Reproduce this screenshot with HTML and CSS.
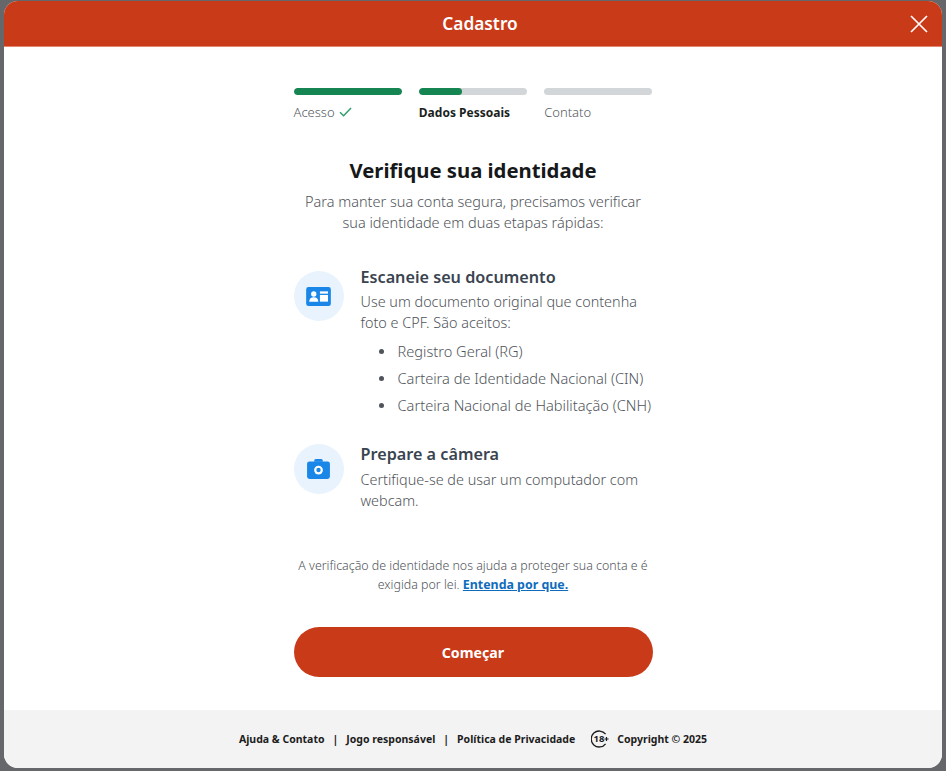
FILE: index.html
```html
<!DOCTYPE html>
<html lang="pt-BR">
<head>
  <meta charset="UTF-8" />
  <meta name="viewport" content="width=device-width, initial-scale=1.0"/>
  <title>Cadastro</title>
  <link rel="stylesheet" href="styles.css">
</head>
<body>
  <div class="modal">
    <header class="modal-header">
      <h1>Cadastro</h1>
      <button class="close" aria-label="Fechar">
        <svg width="18" height="18" viewBox="0 0 18 18"><path d="M1 1L17 17M17 1L1 17" stroke="#fff" stroke-width="1.7" fill="none"/></svg>
      </button>
    </header>

    <main class="content">
      <div class="steps">
        <div class="step">
          <div class="bar"><div class="fill fill-full"></div></div>
          <div class="step-label">Acesso
            <svg class="check" width="13" height="10" viewBox="0 0 13 10"><path d="M1 5.2L4.6 8.8L12 1" stroke="#2a9d68" stroke-width="1.4" fill="none"/></svg>
          </div>
        </div>
        <div class="step">
          <div class="bar"><div class="fill fill-part"></div></div>
          <div class="step-label step-current">Dados Pessoais</div>
        </div>
        <div class="step">
          <div class="bar"></div>
          <div class="step-label">Contato</div>
        </div>
      </div>

      <h2>Verifique sua identidade</h2>
      <p class="intro">Para manter sua conta segura, precisamos verificar sua identidade em duas etapas rápidas:</p>

      <section class="item item-doc">
        <div class="item-icon">
          <svg width="25" height="19" viewBox="0 0 26 20">
            <rect width="26" height="20" rx="2.5" fill="#1a86e8"/>
            <circle cx="8" cy="7.4" r="2.8" fill="#fff"/>
            <path d="M3.2 15.5c0-3 2-4.6 4.8-4.6s4.8 1.6 4.8 4.6z" fill="#fff"/>
            <rect x="14.5" y="4.6" width="8.5" height="2.4" fill="#fff"/>
            <rect x="14.5" y="8.4" width="8.5" height="7" fill="#fff"/>
          </svg>
        </div>
        <div class="item-body">
          <h3>Escaneie seu documento</h3>
          <p>Use um documento original que contenha foto e CPF. São aceitos:</p>
          <ul>
            <li>Registro Geral (RG)</li>
            <li>Carteira de Identidade Nacional (CIN)</li>
            <li>Carteira Nacional de Habilitação (CNH)</li>
          </ul>
        </div>
      </section>

      <section class="item item-cam">
        <div class="item-icon">
          <svg width="23" height="20" viewBox="0 0 24 21">
            <path d="M7.5 3V1.8C7.5 .8 8.2 0 9.2 0h5.6c1 0 1.7 .8 1.7 1.8V3" fill="#1a86e8"/>
            <rect y="2.6" width="24" height="18.4" rx="2.5" fill="#1a86e8"/>
            <circle cx="12" cy="11.6" r="4.6" fill="#fff"/>
            <circle cx="12" cy="11.6" r="2.3" fill="#1a86e8"/>
          </svg>
        </div>
        <div class="item-body">
          <h3>Prepare a câmera</h3>
          <p>Certifique-se de usar um computador com webcam.</p>
        </div>
      </section>

      <p class="notice"><span class="notice-line">A verificação de identidade nos ajuda a proteger sua conta e é</span> <span>exigida por lei.</span> <a href="#">Entenda por que.</a></p>

      <button class="start">Começar</button>
    </main>

    <footer class="modal-footer">
      <a href="#">Ajuda &amp; Contato</a>
      <span class="sep">|</span>
      <a href="#">Jogo responsável</a>
      <span class="sep">|</span>
      <a href="#">Política de Privacidade</a>
      <svg class="age" width="18" height="18" viewBox="0 0 18 18">
        <path d="M14.6 4.2A8 8 0 1 0 14.6 13.8" stroke="#1c1c1c" stroke-width="1.3" fill="none"/>
        <text x="2.6" y="12.4" class="age-text">18</text>
        <path d="M13.4 9h4.2M15.5 6.9v4.2" stroke="#1c1c1c" stroke-width="1.2"/>
      </svg>
      <span class="copy">Copyright © 2025</span>
    </footer>
  </div>
</body>
</html>
```

FILE: styles.css
```css
* {
  box-sizing: border-box;
}
html, body {
  height: 100%;
}
body {
  margin: 0;
  padding: 1px 4px 3px 4px;
  background: #66676b;
  font-family: "Noto Sans", "Open Sans", sans-serif;
  color: #4f545a;
}
.modal {
  height: 767px;
  background: #fff;
  border-radius: 14px;
  display: flex;
  flex-direction: column;
  overflow: hidden;
}
.modal-header {
  height: 46px;
  background: #c93a19;
  border-bottom: 1px solid #e5876f;
  display: flex;
  align-items: center;
  justify-content: center;
  padding: 0 0 0 14px;
  position: relative;
  flex: none;
}
.modal-header h1 {
  margin: 0;
  font-size: 17.3px;
  font-weight: 600;
  color: #fff;
}
.close {
  position: absolute;
  right: 14px;
  top: 14px;
  width: 18px;
  height: 18px;
  padding: 0;
  border: none;
  background: none;
  cursor: pointer;
}
.content {
  flex: 1;
  width: 359px;
  margin: 0 auto;
  padding-top: 41px;
}
.steps {
  display: flex;
  gap: 17px;
}
.step {
  flex: 1;
}
.bar {
  height: 7px;
  border-radius: 4px;
  background: #d2d6d9;
  overflow: hidden;
}
.fill {
  height: 100%;
  background: #158552;
  border-radius: 4px;
}
.fill-full {
  width: 100%;
}
.fill-part {
  width: 40%;
}
.step-label {
  margin-top: 8px;
  font-size: 13px;
  line-height: 18px;
  font-weight: 300;
  color: #555a60;
}
.step-current {
  margin-top: 9px;
  font-weight: 700;
  font-size: 12px;
  color: #1c1f22;
}
.check {
  margin-left: 1px;
}
h2 {
  margin: 33px 0 0;
  font-size: 20.3px;
  line-height: 30px;
  font-weight: 700;
  color: #16181a;
  text-align: center;
}
.intro {
  margin: 6px 0 0;
  padding: 0 8px;
  font-size: 14.5px;
  line-height: 21px;
  font-weight: 300;
  text-align: center;
}
.item {
  display: flex;
  gap: 17px;
}
.item-doc {
  margin-top: 32px;
}
.item-cam {
  margin-top: 23px;
}
.item-icon {
  width: 50px;
  height: 50px;
  flex: none;
  margin-top: 6px;
  border-radius: 50%;
  background: #e8f3fd;
  display: flex;
  align-items: center;
  justify-content: center;
}
.item-cam .item-icon {
  margin-top: 2px;
}
.item-body {
  flex: 1;
  min-width: 0;
}
h3 {
  margin: 0;
  font-size: 16.2px;
  line-height: 24px;
  font-weight: 600;
  color: #3a4450;
}
.item-body p {
  margin: 2px 0 0;
  font-size: 14.4px;
  line-height: 21px;
  font-weight: 300;
}
.item-cam p {
  margin-top: 3px;
}
ul {
  margin: 5px 0 0;
  padding-left: 18px;
  list-style: none;
  font-size: 14.6px;
  line-height: 27px;
  font-weight: 300;
  white-space: nowrap;
}
li {
  display: flex;
  align-items: center;
  gap: 14px;
}
li::before {
  content: "";
  width: 5px;
  height: 5px;
  border-radius: 50%;
  background: #4f545a;
}
.notice {
  margin: 45px 0 0;
  font-size: 12.4px;
  line-height: 19px;
  font-weight: 300;
  text-align: center;
}
.notice-line {
  display: block;
}
.notice a {
  font-weight: 700;
  color: #0f6cbd;
}
.start {
  display: block;
  width: 100%;
  height: 50px;
  margin-top: 33px;
  border: none;
  border-radius: 25px;
  background: #c93a19;
  color: #fff;
  font-family: inherit;
  font-size: 14.2px;
  font-weight: 700;
  cursor: pointer;
}
.modal-footer {
  height: 58px;
  flex: none;
  background: #f3f3f3;
  display: flex;
  align-items: center;
  justify-content: center;
  font-size: 10.5px;
  font-weight: 700;
  color: #1c1c1c;
}
.modal-footer a {
  color: inherit;
  text-decoration: none;
}
.sep {
  margin: 0 8px;
}
.age {
  margin: 0 8px 0 16px;
}
.age-text {
  font-size: 9.5px;
  font-weight: 700;
  fill: #1c1c1c;
}
```
